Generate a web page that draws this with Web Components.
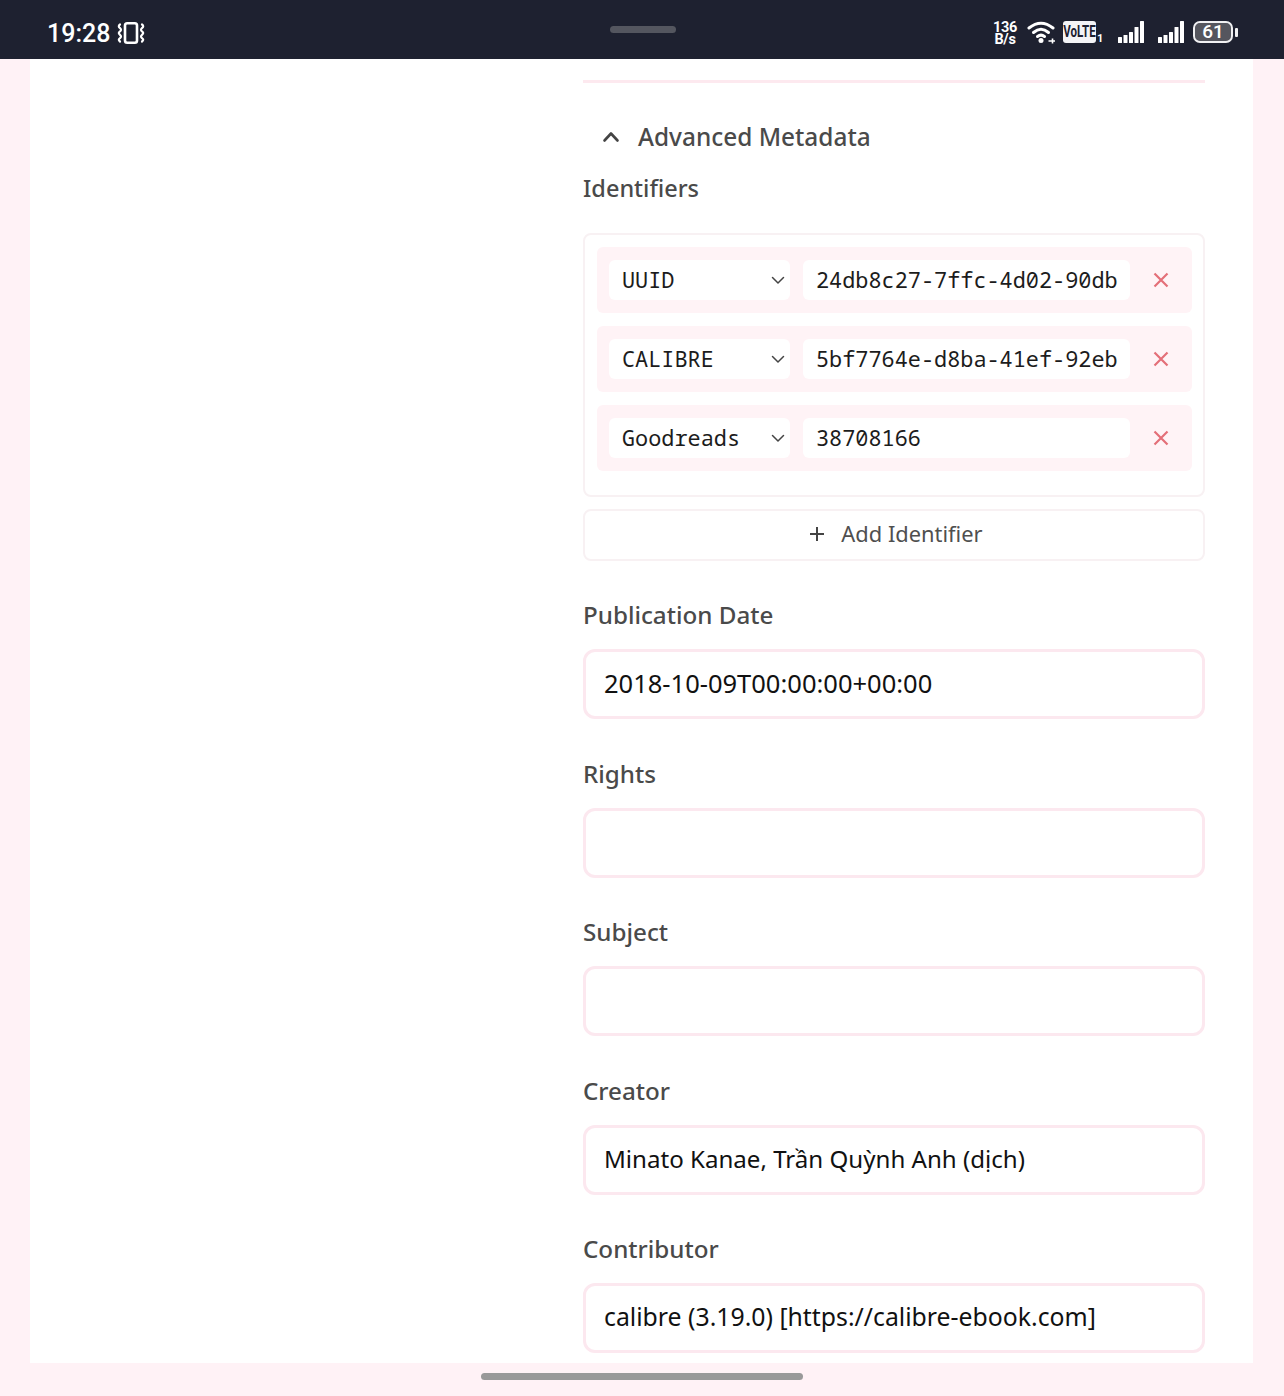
<!DOCTYPE html>
<html lang="en">
<head>
<meta charset="utf-8">
<title>Advanced Metadata</title>
<style>
  html, body { margin: 0; height: 100%; }
  body {
    display: flex;
    flex-direction: column;
    height: 1396px;
    overflow: hidden;
    background: #fff2f6;
    font-family: "Noto Sans", sans-serif;
  }
</style>
</head>
<body>
  <status-bar></status-bar>
  <metadata-page>
    <collapse-section title="Advanced Metadata">
      <identifier-list label="Identifiers">
        <identifier-row scheme="UUID" value="24db8c27-7ffc-4d02-90db"></identifier-row>
        <identifier-row scheme="CALIBRE" value="5bf7764e-d8ba-41ef-92eb"></identifier-row>
        <identifier-row scheme="Goodreads" value="38708166"></identifier-row>
      </identifier-list>
      <text-field label="Publication Date" style="--value-size: 25.5px">2018-10-09T00:00:00+00:00</text-field>
      <text-field label="Rights"></text-field>
      <text-field label="Subject"></text-field>
      <text-field label="Creator" style="--value-size: 24.1px">Minato Kanae, Trần Quỳnh Anh (dịch)</text-field>
      <text-field label="Contributor" style="--value-size: 24.8px">calibre (3.19.0) [https://calibre-ebook.com]</text-field>
    </collapse-section>
  </metadata-page>
  <nav-handle></nav-handle>

<script>
const signalBars = `
  <svg width="26" height="24" viewBox="0 0 26 24" fill="#fff">
    <rect x="0" y="17" width="4" height="6" rx="0.5"/>
    <rect x="5.5" y="15" width="4" height="8" rx="0.5"/>
    <rect x="11" y="12" width="4" height="11" rx="0.5"/>
    <rect x="16.5" y="7" width="4" height="16" rx="0.5"/>
    <rect x="22" y="1" width="4" height="22" rx="0.5"/>
  </svg>`;

class StatusBar extends HTMLElement {
  constructor() {
    super();
    this.attachShadow({ mode: "open" });
  }

  connectedCallback() {
    this.shadowRoot.innerHTML = `
      <style>
        :host {
          display: grid;
          grid-template-columns: 1fr auto 1fr;
          align-items: center;
          flex: 0 0 59px;
          height: 59px;
          padding: 0 46px 0 47px;
          box-sizing: border-box;
          background: #1e2130;
          color: #fff;
          font-family: Roboto, sans-serif;
        }

        svg { display: block; }

        .left {
          display: flex;
          align-items: center;
          gap: 7px;
          padding-top: 7px;
        }

        .time {
          font-size: 25px;
          font-weight: 500;
          line-height: 1;
        }

        .handle {
          width: 66px;
          height: 7px;
          margin-top: -1px;
          border-radius: 4px;
          background: #54565f;
        }

        .right {
          display: flex;
          align-items: center;
          justify-content: flex-end;
          padding-top: 5px;
        }

        .speed {
          width: 24px;
          margin-top: 4px;
          font-size: 14.5px;
          font-weight: 700;
          line-height: 12px;
          letter-spacing: -0.3px;
          text-align: center;
        }

        .wifi { margin-left: 10px; }

        .volte {
          width: 33px;
          height: 22px;
          margin-left: 7px;
          border-radius: 3px;
          background: #f4f4f6;
          color: #1e2130;
          font-size: 16px;
          font-weight: 700;
          line-height: 22px;
          text-align: center;
          overflow: hidden;
        }

        .volte span {
          display: inline-block;
          margin: 0 -6px;
          transform: scaleX(0.72);
        }

        .sim {
          width: 6px;
          margin: 12px 0 0 1px;
          font-size: 11px;
          font-weight: 700;
          line-height: 1;
        }

        .signal-a { margin-left: 15px; }
        .signal-b { margin-left: 14px; }

        .battery {
          display: flex;
          align-items: center;
          margin-left: 9px;
          gap: 2px;
        }

        .battery-body {
          width: 36px;
          height: 18px;
          border: 2px solid #f0f0f2;
          border-radius: 7px;
          background: #55565e;
          background-clip: padding-box;
          font-size: 19px;
          font-weight: 500;
          line-height: 18px;
          text-align: center;
        }

        .battery-cap {
          width: 3px;
          height: 9px;
          border-radius: 1px;
          background: #f0f0f2;
        }
      </style>
      <div class="left">
        <span class="time">19:28</span>
        <svg width="28" height="24" viewBox="0 0 28 24" fill="none" stroke="#fff" stroke-width="2.2" stroke-linecap="round" stroke-linejoin="round">
          <rect x="8" y="2.2" width="12" height="19.6" rx="2.2" stroke-width="2.6"/>
          <path d="M3 3.5 Q0.6 5.2 3 7 Q5 8.6 3 10.4 Q0.6 12 3 13.8 Q5 15.4 3 17.2 Q0.6 18.8 3 20.5"/>
          <path d="M25 3.5 Q27.4 5.2 25 7 Q23 8.6 25 10.4 Q27.4 12 25 13.8 Q23 15.4 25 17.2 Q27.4 18.8 25 20.5"/>
        </svg>
      </div>
      <div class="handle"></div>
      <div class="right">
        <div class="speed">136<br>B/s</div>
        <svg class="wifi" width="29" height="24" viewBox="0 0 29 24" fill="none" stroke="#fff" stroke-width="3" stroke-linecap="round">
          <path d="M2 8 Q14 -1.5 26 8"/>
          <path d="M6.5 12.5 Q14 6 21.5 12.5"/>
          <path d="M10.5 16.5 Q14 13.8 17.5 16.5"/>
          <circle cx="14" cy="20.5" r="2.5" fill="#fff" stroke="none"/>
          <path d="M21.5 21 H28 M25.5 18.5 V23.5" stroke-width="1.6" stroke-linecap="butt"/>
        </svg>
        <div class="volte"><span>VoLTE</span></div>
        <div class="sim">1</div>
        <div class="signal-a">${signalBars}</div>
        <div class="signal-b">${signalBars}</div>
        <div class="battery">
          <div class="battery-body">61</div>
          <div class="battery-cap"></div>
        </div>
      </div>
    `;
  }
}

class MetadataPage extends HTMLElement {
  constructor() {
    super();
    this.attachShadow({ mode: "open" });
  }

  connectedCallback() {
    this.shadowRoot.innerHTML = `
      <style>
        :host {
          display: block;
          flex: 1 1 auto;
          margin: 0 31px 0 30px;
          background: #fff;
          overflow: hidden;
        }

        .form {
          display: grid;
          grid-template-columns: 553px 622px;
          padding-top: 21px;
        }

        .main { grid-column: 2; }
      </style>
      <div class="form">
        <div class="main"><slot></slot></div>
      </div>
    `;
  }
}

class CollapseSection extends HTMLElement {
  constructor() {
    super();
    this.attachShadow({ mode: "open" });
  }

  connectedCallback() {
    const title = this.getAttribute("title") || "";
    this.removeAttribute("title");
    this.shadowRoot.innerHTML = `
      <style>
        :host {
          display: block;
          border-top: 3px solid #fde9ef;
        }

        .header {
          display: flex;
          align-items: center;
          gap: 17px;
          height: 40px;
          margin-top: 34px;
          padding-left: 18px;
          color: #4a4a4a;
          font-size: 24.4px;
          font-weight: 500;
          line-height: 40px;
        }

        .body {
          display: flex;
          flex-direction: column;
          gap: 37.4px;
          margin-top: 14px;
        }
      </style>
      <div class="header">
        <svg width="20" height="20" viewBox="0 0 20 20" fill="none" stroke="#444" stroke-width="2.6" stroke-linecap="round" stroke-linejoin="round">
          <path d="M3.5 13.5 L10 6.5 L16.5 13.5"/>
        </svg>
        <span>${title}</span>
      </div>
      <div class="body"><slot></slot></div>
    `;
  }
}

class IdentifierList extends HTMLElement {
  constructor() {
    super();
    this.attachShadow({ mode: "open" });
  }

  connectedCallback() {
    const label = this.getAttribute("label") || "";
    this.shadowRoot.innerHTML = `
      <style>
        :host { display: block; }

        .label {
          height: 34px;
          color: #4a4a4a;
          font-size: 23.5px;
          font-weight: 500;
          line-height: 34px;
        }

        .box {
          display: flex;
          flex-direction: column;
          gap: 13px;
          margin-top: 28px;
          padding: 12px 11px 24px 12px;
          border: 2px solid #f8f1f3;
          border-radius: 8px;
        }

        .add {
          display: flex;
          align-items: center;
          justify-content: center;
          gap: 16px;
          height: 52px;
          margin-top: 12px;
          padding: 0 0 2px 4px;
          box-sizing: border-box;
          border: 2px solid #f8f1f3;
          border-radius: 8px;
          color: #4f4f4f;
          font-size: 21.875px;
          line-height: 1;
        }
      </style>
      <div class="label">${label}</div>
      <div class="box"><slot></slot></div>
      <div class="add">
        <svg width="16" height="16" viewBox="0 0 16 16" fill="none" stroke="#444" stroke-width="2">
          <path d="M8 1 V15 M1 8 H15"/>
        </svg>
        <span>Add Identifier</span>
      </div>
    `;
  }
}

class IdentifierRow extends HTMLElement {
  constructor() {
    super();
    this.attachShadow({ mode: "open" });
  }

  connectedCallback() {
    const scheme = this.getAttribute("scheme") || "";
    const value = this.getAttribute("value") || "";
    this.shadowRoot.innerHTML = `
      <style>
        :host {
          display: grid;
          grid-template-columns: 181px 327px 1fr;
          gap: 13px;
          align-items: center;
          height: 66px;
          padding-left: 12px;
          box-sizing: border-box;
          border-radius: 6px;
          background: #fff3f6;
          font-family: "Noto Sans Mono", "DejaVu Sans Mono", monospace;
          font-size: 21.875px;
          color: #1c1c1c;
        }

        .control {
          display: flex;
          align-items: center;
          height: 40px;
          padding: 0 13px 2px;
          box-sizing: border-box;
          border-radius: 6px;
          background: #fff;
          white-space: nowrap;
        }

        .control svg { margin: 2px -8px 0 auto; }

        .remove {
          display: flex;
          justify-content: center;
          margin-left: -13px;
        }
      </style>
      <div class="control">
        <span>${scheme}</span>
        <svg width="14" height="14" viewBox="0 0 14 14" fill="none" stroke="#444" stroke-width="1.5" stroke-linecap="round" stroke-linejoin="round">
          <path d="M1.5 4.5 L7 10 L12.5 4.5"/>
        </svg>
      </div>
      <div class="control">${value}</div>
      <div class="remove">
        <svg width="16" height="16" viewBox="0 0 16 16" fill="none" stroke="#e46f78" stroke-width="2.2">
          <path d="M1.5 1.5 L14.5 14.5 M14.5 1.5 L1.5 14.5"/>
        </svg>
      </div>
    `;
  }
}

class TextField extends HTMLElement {
  constructor() {
    super();
    this.attachShadow({ mode: "open" });
  }

  connectedCallback() {
    const label = this.getAttribute("label") || "";
    this.shadowRoot.innerHTML = `
      <style>
        :host { display: block; }

        .label {
          height: 34px;
          color: #4a4a4a;
          font-size: 24.2px;
          font-weight: 500;
          line-height: 34px;
        }

        .input {
          display: flex;
          align-items: center;
          height: 70px;
          margin-top: 17px;
          padding: 0 18px 3px;
          box-sizing: border-box;
          border: 3px solid #fce8ef;
          border-radius: 12px;
          color: #111;
          font-size: var(--value-size, 25px);
          white-space: nowrap;
        }
      </style>
      <div class="label">${label}</div>
      <div class="input"><slot></slot></div>
    `;
  }
}

class NavHandle extends HTMLElement {
  constructor() {
    super();
    this.attachShadow({ mode: "open" });
  }

  connectedCallback() {
    this.shadowRoot.innerHTML = `
      <style>
        :host {
          display: flex;
          justify-content: center;
          flex: 0 0 33px;
          padding-top: 10px;
          box-sizing: border-box;
        }

        .pill {
          width: 322px;
          height: 7px;
          border-radius: 4px;
          background: #999;
        }
      </style>
      <div class="pill"></div>
    `;
  }
}

customElements.define("status-bar", StatusBar);
customElements.define("metadata-page", MetadataPage);
customElements.define("collapse-section", CollapseSection);
customElements.define("identifier-list", IdentifierList);
customElements.define("identifier-row", IdentifierRow);
customElements.define("text-field", TextField);
customElements.define("nav-handle", NavHandle);
</script>
</body>
</html>
